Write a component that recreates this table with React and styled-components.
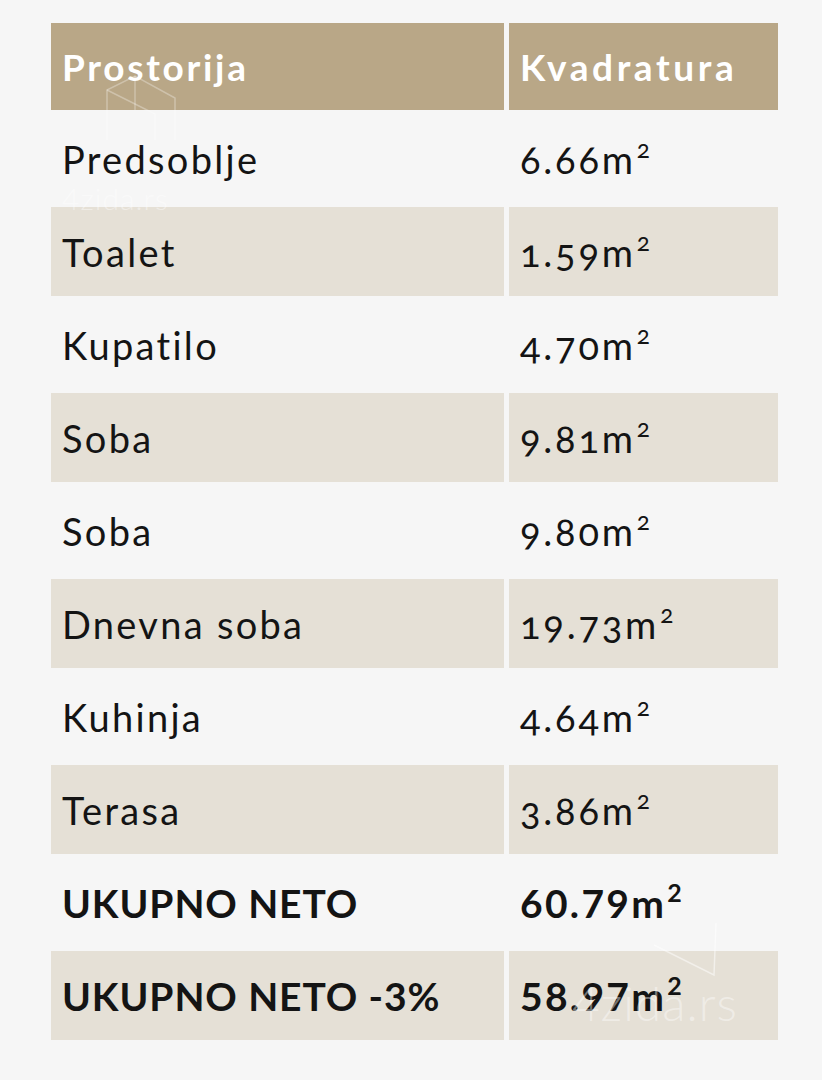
import React from "react";
import styled, { createGlobalStyle } from "styled-components";

const GlobalStyle = createGlobalStyle`
  html, body {
    margin: 0;
    padding: 0;
    background: #f6f6f6;
  }
  body {
    font-family: "Lato", "Liberation Sans", sans-serif;
    color: #141414;
  }
`;

const Page = styled.div`
  position: relative;
  width: 822px;
  height: 1080px;
  padding: 19px 0 0 46px;
  box-sizing: border-box;
  overflow: hidden;
`;

const Table = styled.table`
  border-collapse: separate;
  border-spacing: 5px 4px;
`;

const HeadCell = styled.th`
  height: 87px;
  width: ${(p) => p.$w}px;
  padding: 0 0 0 11px;
  box-sizing: border-box;
  background: #b9a787;
  color: #ffffff;
  font-size: 37px;
  font-weight: 700;
  text-align: left;
  letter-spacing: ${(p) => p.$ls}px;
`;

const Row = styled.tr`
  background: ${(p) => (p.$shaded ? "#e5e0d6" : "transparent")};
`;

const NameCell = styled.td`
  height: 89px;
  padding: 0 0 0 11px;
  box-sizing: border-box;
  font-size: ${(p) => (p.$bold ? 39 : 38)}px;
  font-weight: ${(p) => (p.$bold ? 700 : 400)};
  letter-spacing: ${(p) => (p.$bold ? "0.9px" : "2.3px")};
  white-space: nowrap;
`;

const AreaCell = styled.td`
  height: 89px;
  padding: 0 0 0 11px;
  box-sizing: border-box;
  font-size: ${(p) => (p.$bold ? 39 : 38)}px;
  font-weight: ${(p) => (p.$bold ? 700 : 400)};
  letter-spacing: ${(p) => (p.$bold ? "2.3px" : "2.8px")};
  font-variant-numeric: ${(p) => (p.$bold ? "lining-nums" : "oldstyle-nums")};
  white-space: nowrap;
`;

const Sup = styled.sup`
  font-size: 0.64em;
  vertical-align: 0.62em;
  line-height: 0;
  margin-left: 1px;
  letter-spacing: 0;
`;

const Watermark = styled.div`
  position: absolute;
  left: ${(p) => p.$x}px;
  top: ${(p) => p.$y}px;
  font-family: "Lato", sans-serif;
  font-weight: 300;
  font-size: ${(p) => p.$size}px;
  color: rgba(255, 255, 255, 0.42);
  letter-spacing: 1px;
  pointer-events: none;
`;

const Outline = styled.svg`
  position: absolute;
  left: ${(p) => p.$x}px;
  top: ${(p) => p.$y}px;
  pointer-events: none;
`;

const rows = [
  ["Predsoblje", "6.66"],
  ["Toalet", "1.59"],
  ["Kupatilo", "4.70"],
  ["Soba", "9.81"],
  ["Soba", "9.80"],
  ["Dnevna soba", "19.73"],
  ["Kuhinja", "4.64"],
  ["Terasa", "3.86"],
  ["UKUPNO NETO", "60.79", true],
  ["UKUPNO NETO -3%", "58.97", true],
];

export default function App() {
  return (
    <Page>
      <GlobalStyle />
      <Table>
        <thead>
          <tr>
            <HeadCell $w={453} $ls={2.7}>Prostorija</HeadCell>
            <HeadCell $w={269} $ls={3.6}>Kvadratura</HeadCell>
          </tr>
        </thead>
        <tbody>
          {rows.map(([name, area, bold], i) => (
            <Row key={i} $shaded={i % 2 === 1}>
              <NameCell $bold={bold}>{name}</NameCell>
              <AreaCell $bold={bold}>
                {area}m<Sup>2</Sup>
              </AreaCell>
            </Row>
          ))}
        </tbody>
      </Table>

      <Outline $x={95} $y={70} width="90" height="70" viewBox="0 0 90 70">
        <g fill="none" stroke="rgba(255,255,255,0.3)" strokeWidth="1.5">
          <path d="M12 70 V20 L40 6 L80 28 V70" />
          <path d="M40 6 V40" />
          <path d="M12 20 L60 44 V70" />
        </g>
      </Outline>
      <Watermark $x={62} $y={180} $size={30}>4zida.rs</Watermark>

      <Outline $x={650} $y={915} width="80" height="65" viewBox="0 0 80 65">
        <g fill="none" stroke="rgba(255,255,255,0.5)" strokeWidth="1.5">
          <path d="M4 30 L64 60 L66 8" />
        </g>
      </Outline>
      <Watermark $x={572} $y={974} $size={48}>4zida.rs</Watermark>
    </Page>
  );
}
